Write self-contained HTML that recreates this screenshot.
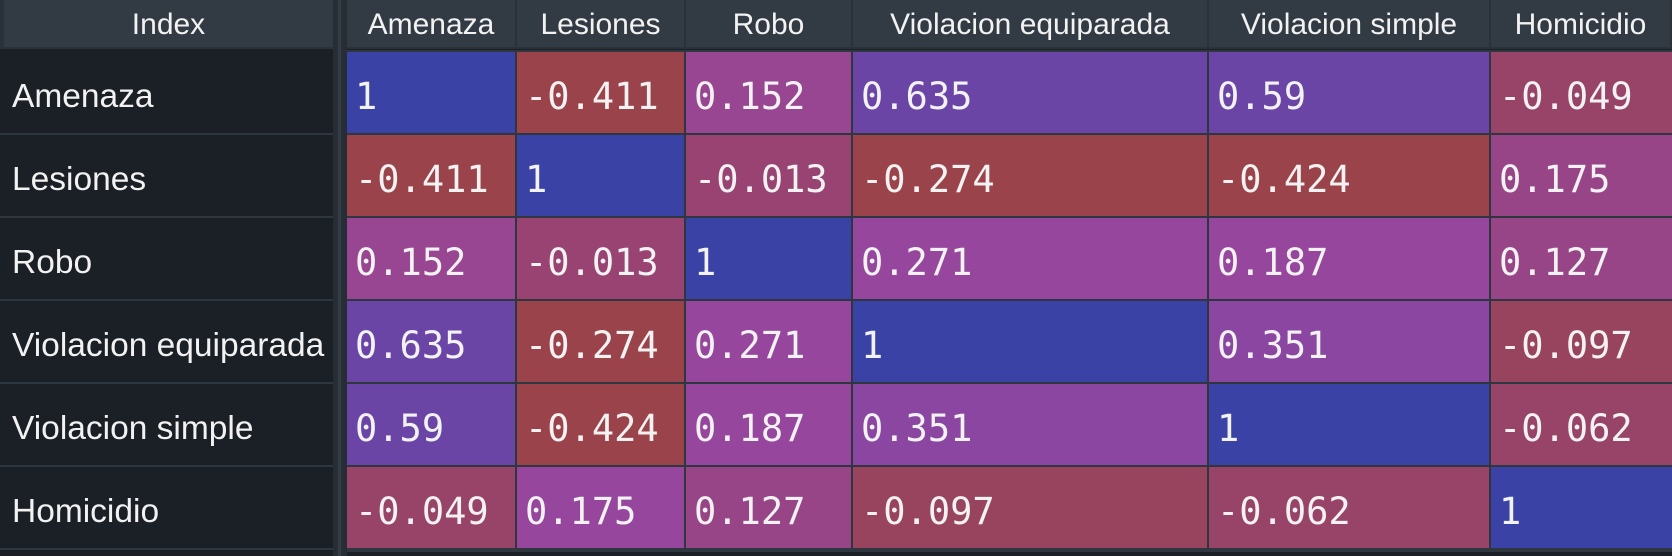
<!DOCTYPE html>
<html><head><style>
html,body{margin:0;padding:0;}
body{width:1672px;height:556px;background:#1b1f26;position:relative;overflow:hidden;font-family:"Liberation Sans","DejaVu Sans",sans-serif;color:#f2f2f2;}
.hd{position:absolute;top:0;height:47px;background:#323b44;font-size:30px;line-height:50px;text-align:center;}
.lb{position:absolute;left:0;width:333px;font-size:33.5px;padding-left:12px;padding-top:8px;box-sizing:border-box;white-space:nowrap;}
.c{position:absolute;font-family:"DejaVu Sans Mono","Liberation Mono",monospace;font-size:37px;padding-left:8px;padding-top:8px;box-sizing:border-box;}
.rl{position:absolute;left:0;width:333px;height:2px;background:#2e3740;}
</style></head><body>
<div style="position:absolute;left:0;top:0;width:1672px;height:49px;background:#2a3139"></div>
<div style="position:absolute;left:333px;top:0;width:14px;height:556px;background:#262d34"></div>
<div style="position:absolute;left:338px;top:0;width:3px;height:556px;background:#343c45"></div>
<div style="position:absolute;left:347px;top:50px;width:1325px;height:502px;background:#2e3740"></div>
<div class="hd" style="left:4px;width:329px">Index</div>
<div id="hdrs"></div>
<script>
var xs=[347,517,686,853,1209,1491,1672];
var names=["Amenaza","Lesiones","Robo","Violacion equiparada","Violacion simple","Homicidio"];
var ys=[52,135,218,301,384,467,550];
var v=[["1","-0.411","0.152","0.635","0.59","-0.049"],["-0.411","1","-0.013","-0.274","-0.424","0.175"],["0.152","-0.013","1","0.271","0.187","0.127"],["0.635","-0.274","0.271","1","0.351","-0.097"],["0.59","-0.424","0.187","0.351","1","-0.062"],["-0.049","0.175","0.127","-0.097","-0.062","1"]];
function col(s,i,j){var x=parseFloat(s);
if(x==1)return"#3a43a5";
if(x>=0.5)return"#6a45a6";
if(x>=0.3)return"#8a46a1";
if(x>=0.16)return (i==1&&j==5)?"#984588":"#97469d";
if(x>=0.14)return"#984592";
if(x>=0.1)return"#984587";
if(x>=-0.03)return"#984372";
if(x>=-0.07)return"#984468";
if(x>=-0.2)return"#98445f";
return"#9a434b";}
var h="";
for(var j=0;j<6;j++){h+='<div class="hd" style="left:'+xs[j]+'px;width:'+(xs[j+1]-xs[j]-2)+'px">'+names[j]+'</div>';}
for(var i=0;i<6;i++){var y=ys[i],hh=ys[i+1]-ys[i]-2;
h+='<div class="lb" style="top:'+y+'px;height:'+hh+'px;line-height:'+(hh-8)+'px">'+names[i]+'</div>';
h+='<div class="rl" style="top:'+(y+hh)+'px"></div>';
for(var j=0;j<6;j++){var w=xs[j+1]-xs[j]-(j==5?0:2);
h+='<div class="c" style="left:'+xs[j]+'px;top:'+y+'px;width:'+w+'px;height:'+hh+'px;line-height:'+(hh-8)+'px;background:'+col(v[i][j],i,j)+'">'+v[i][j]+'</div>';}}
document.getElementById("hdrs").innerHTML=h;
</script>
</body></html>
